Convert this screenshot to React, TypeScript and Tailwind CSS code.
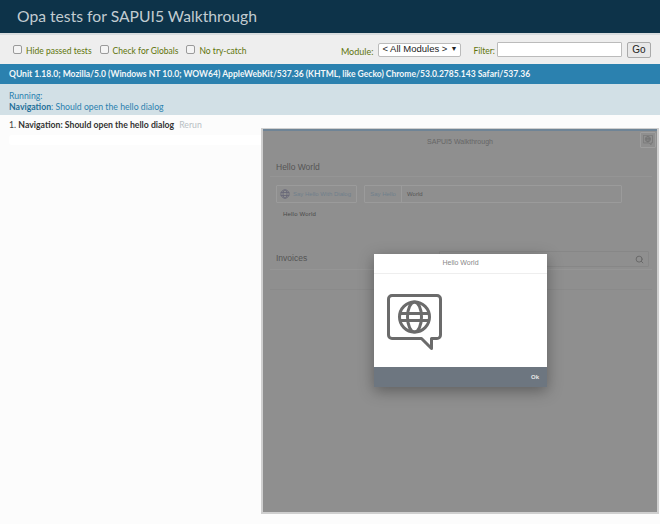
import { Search } from 'lucide-react'

function HelloIcon({ className }: { className: string }) {
  return (
    <svg viewBox="0 0 56 56" fill="none" stroke="currentColor" strokeWidth="3" className={className}>
      <path d="M5 1.5H50a3.5 3.5 0 0 1 3.5 3.5V41a3.5 3.5 0 0 1-3.5 3.5H44.5V54.5L34.5 44.5H5A3.5 3.5 0 0 1 1.5 41V5A3.5 3.5 0 0 1 5 1.5Z" strokeLinejoin="round" />
      <circle cx="27.5" cy="23" r="15" />
      <ellipse cx="27.5" cy="23" rx="7" ry="15" />
      <path d="M13 19.5H42M13 26.5H42" />
    </svg>
  )
}

function Option({ label }: { label: string }) {
  return (
    <label className="flex items-start gap-[4px]">
      <span className="h-[9px] w-[9px] rounded-[2px] border border-[#9a9a9a] bg-[#f4f4f4]" />
      <span className="text-[8.5px] leading-[13px] text-[#5e740b]">{label}</span>
    </label>
  )
}

function AppFrame() {
  return (
    <div className="absolute left-[261px] top-[128px] h-[386px] w-[398px] border-2 border-t-[1px] border-[#cfcfcf] bg-[#8f8f8f] font-['Liberation_Sans',sans-serif]">
      <div className="h-[2px] bg-[#6f8496]" />
      <div className="flex h-[22px] items-center justify-center text-[7px] text-[#666]">SAPUI5 Walkthrough</div>
      <div className="absolute right-[1px] top-[3px] flex h-[16px] w-[16px] items-center justify-center rounded-[1px] border border-[#9e9e9e] text-[#6a6a6a]">
        <HelloIcon className="h-[10px] w-[10px]" />
      </div>
      <div className="pl-[7px] pr-[5px] pt-[7px]">
        <div className="flex h-[17px] items-center border-b border-[#959595] px-[6px] pb-[1px] text-[8.5px] text-[#555]">Hello World</div>
        <div className="mt-[8px] flex gap-[7px] px-[6px]">
          <div className="flex h-[18px] w-[81px] items-center gap-[3px] rounded-[1px] border border-[#9b9b9b] px-[3px] text-[6px] text-[#6f7f8c]">
            <svg viewBox="0 0 12 12" fill="none" stroke="#667" strokeWidth="1" className="h-[10px] w-[10px] shrink-0">
              <circle cx="6" cy="6" r="5" />
              <ellipse cx="6" cy="6" rx="2.4" ry="5" />
              <path d="M1 4.2H11M1 7.8H11" />
            </svg>
            <span className="whitespace-nowrap">Say Hello With Dialog</span>
          </div>
          <div className="flex h-[18px] w-[258px] items-center rounded-[1px] border border-[#9b9b9b] text-[6px]">
            <span className="flex h-full w-[37px] items-center justify-center border-r border-[#9b9b9b] text-[#6f7f8c]">Say Hello</span>
            <span className="pl-[5px] text-[#555]">World</span>
          </div>
        </div>
        <div className="mt-[7px] px-[13px] text-[6px] tracking-[0.2px] text-[#4a4a4a]">Hello World</div>
        <div className="mt-[32px] flex h-[19px] items-center border-b border-[#959595] px-[6px] pb-[3px] text-[8.5px] text-[#555]">Invoices</div>
        <div className="h-[20px] border-b border-[#8a8a8a]" />
      </div>
      <div className="absolute right-[8px] top-[122px] flex h-[16px] w-[210px] items-center justify-end rounded-[1px] border border-[#878787] pr-[4px] text-[#666]">
        <Search size={9} strokeWidth={2.5} />
      </div>
      <div className="absolute left-[111px] top-[125px] w-[173px] bg-white shadow-[0_4px_14px_rgba(0,0,0,0.35)]">
        <div className="flex h-[20px] items-center justify-center border-b border-[#eee] text-[7px] text-[#888]">Hello World</div>
        <div className="h-[93px] pl-[13px] pt-[20px] text-[#6b6b6b]">
          <HelloIcon className="h-[56px] w-[56px]" />
        </div>
        <div className="flex h-[20px] items-center justify-end bg-[#6d7680] pr-[8px] text-[6px] font-bold text-[#e6e6e6]">Ok</div>
      </div>
    </div>
  )
}

export default function App() {
  return (
    <div className="relative h-[524px] w-[660px] overflow-hidden bg-[#fcfcfc] font-['Lato',sans-serif]">
      <h1 className="flex h-[33px] items-center bg-[#0d3349] pl-[17px] text-[15.7px] leading-none text-[#c2ccd1]">Opa tests for SAPUI5 Walkthrough</h1>
      <div className="h-[2px] bg-[#d8dcde]" />
      <div className="flex h-[29px] items-center justify-between bg-[#eeeeee] pl-[13px] pr-[9px]">
        <div className="flex items-center gap-[8px] pt-[3px]">
          <Option label="Hide passed tests" />
          <Option label="Check for Globals" />
          <Option label="No try-catch" />
        </div>
        <div className="flex items-center">
          <span className="pt-[4px] text-[9px] text-[#5e740b]">Module:</span>
          <div className="ml-[5px] flex h-[14px] w-[83px] items-center justify-between rounded-[2px] border border-[#bbb] bg-white px-[3px] font-['Liberation_Sans',sans-serif] text-[9.5px] whitespace-nowrap text-[#222]">
            <span>&lt; All Modules &gt;</span>
            <span className="text-[7px]">▼</span>
          </div>
          <span className="ml-[12px] pt-[3px] text-[8.5px] text-[#5e740b]">Filter:</span>
          <div className="ml-[2px] h-[15px] w-[125px] rounded-[1px] border border-[#bbb] bg-white" />
          <div className="ml-[5px] flex h-[16px] w-[24px] items-center justify-center rounded-[2px] border border-[#aaa] bg-[#e8e8e8] font-['Liberation_Sans',sans-serif] text-[10px] text-[#222]">Go</div>
        </div>
      </div>
      <div className="flex h-[20px] items-center whitespace-nowrap bg-[#2b81af] pl-[9px] text-[8.55px] font-bold text-[#f2f6f8]">
        QUnit 1.18.0; Mozilla/5.0 (Windows NT 10.0; WOW64) AppleWebKit/537.36 (KHTML, like Gecko) Chrome/53.0.2785.143 Safari/537.36
      </div>
      <div className="h-[31px] bg-[#d2e0e6] pl-[9px] pt-[6px] text-[8.7px] leading-[11px] text-[#2b81af]">
        <div>Running:</div>
        <div><b className="text-[#1f6f99]">Navigation</b>: Should open the hello dialog</div>
      </div>
      <div className="flex items-center pl-[9px] pt-[3px] text-[8.7px] leading-[13px]">
        <span className="text-[#444]">1.&nbsp;</span>
        <b className="text-[#333]">Navigation: Should open the hello dialog</b>
        <span className="ml-[5px] text-[#b8c0c4]">Rerun</span>
      </div>
      <div className="ml-[9px] mt-[4px] h-[10px] w-[253px] rounded-l-[3px] bg-white" />
      <AppFrame />
    </div>
  )
}
